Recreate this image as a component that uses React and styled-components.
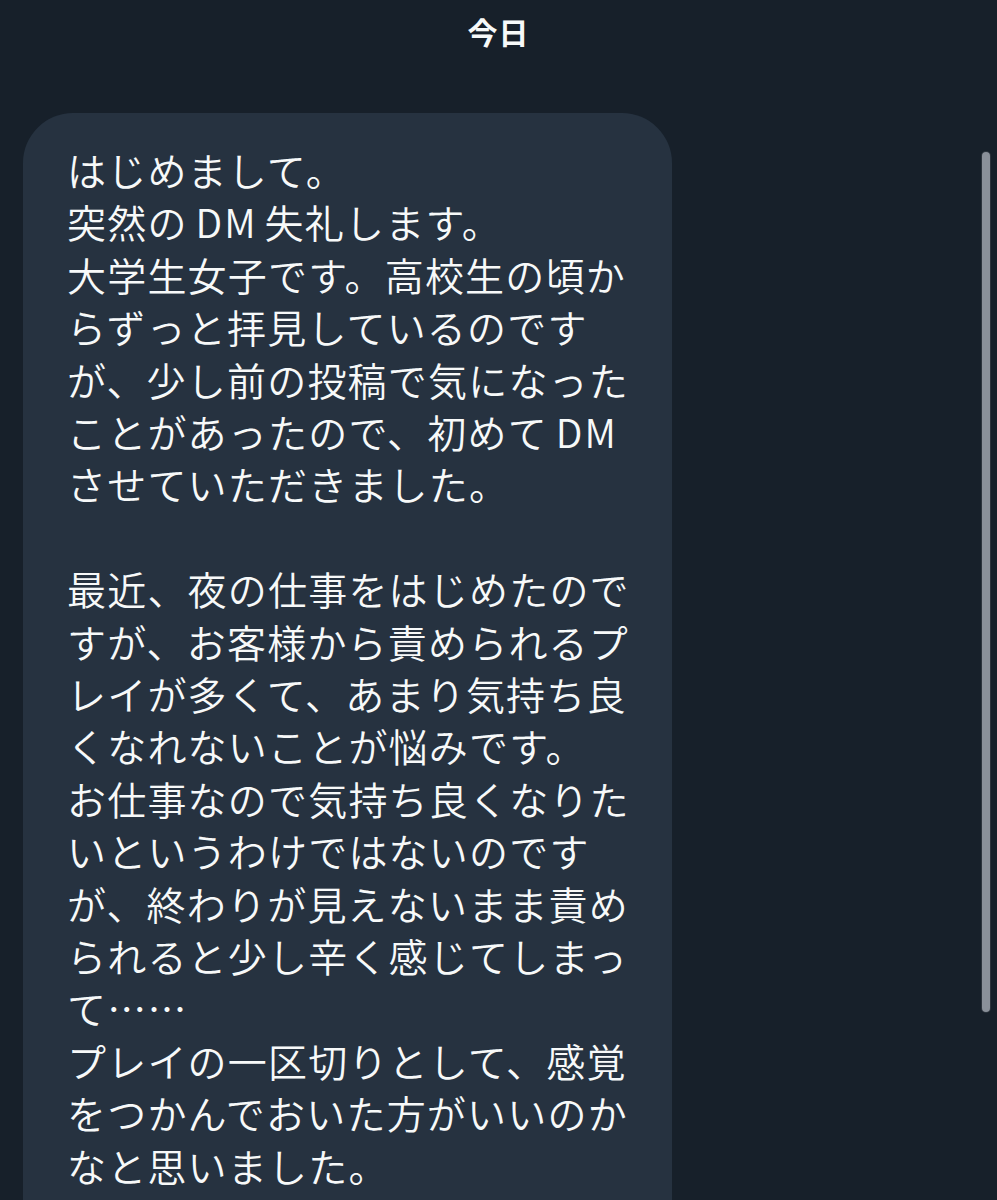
import React from "react";
import styled, { createGlobalStyle } from "styled-components";

const GlobalStyle = createGlobalStyle`
  html, body {
    margin: 0;
    padding: 0;
    background: #17202a;
    height: 1200px;
    overflow: hidden;
  }
  #root {
    height: 1200px;
  }
`;

const Screen = styled.div`
  position: relative;
  height: 1200px;
  background: #17202a;
  display: flex;
  flex-direction: column;
  font-family: "Noto Sans CJK JP", "Noto Sans", sans-serif;
  color: #f7f9f9;
  overflow: hidden;
`;

const DateLabel = styled.div`
  height: 62px;
  line-height: 62px;
  text-align: center;
  font-size: 30px;
  font-weight: 700;
  letter-spacing: 1px;
`;

const MessageRow = styled.div`
  display: flex;
  padding: 51px 0 0 23px;
`;

const Bubble = styled.div`
  width: 649px;
  box-sizing: border-box;
  padding: 30px 30px 60px 44px;
  background: #263240;
  border-radius: 50px 50px 0 0;
  min-height: 1200px;
`;

const Line = styled.p`
  margin: 0;
  font-size: 39px;
  font-weight: 350;
  line-height: 52.4px;
  letter-spacing: 1.2px;
  white-space: nowrap;
  min-height: 52.4px;
`;

const Latin = styled.span`
  margin: 0 7px 0 8px;
  letter-spacing: 2px;
`;

const Scrollbar = styled.div`
  position: absolute;
  top: 152px;
  right: 7px;
  width: 8px;
  height: 860px;
  border-radius: 4px;
  background: #8a9099;
  box-shadow: 0 0 0 1px rgba(60, 66, 75, 0.6);
`;

const lines = [
  "はじめまして。",
  "突然の|DM|失礼します。",
  "大学生女子です。高校生の頃か",
  "らずっと拝見しているのです",
  "が、少し前の投稿で気になった",
  "ことがあったので、初めて|DM|",
  "させていただきました。",
  "",
  "最近、夜の仕事をはじめたので",
  "すが、お客様から責められるプ",
  "レイが多くて、あまり気持ち良",
  "くなれないことが悩みです。",
  "お仕事なので気持ち良くなりた",
  "いというわけではないのです",
  "が、終わりが見えないまま責め",
  "られると少し辛く感じてしまっ",
  "て……",
  "プレイの一区切りとして、感覚",
  "をつかんでおいた方がいいのか",
  "なと思いました。",
];

// segments between "|" marks are half-width latin runs
const renderLine = (text) =>
  text.split("|").map((part, i) =>
    i % 2 === 1 ? <Latin key={i}>{part}</Latin> : part
  );

export default function App() {
  return (
    <>
      <GlobalStyle />
      <Screen>
        <DateLabel>今日</DateLabel>
        <MessageRow>
          <Bubble>
            {lines.map((text, i) => (
              <Line key={i}>{renderLine(text)}</Line>
            ))}
          </Bubble>
        </MessageRow>
        <Scrollbar />
      </Screen>
    </>
  );
}
